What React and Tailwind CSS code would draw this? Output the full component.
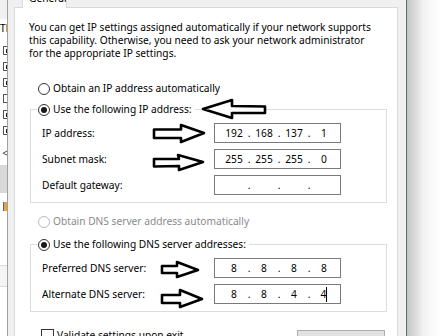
import { Fragment } from 'react'

const font = { fontFamily: '"Noto Sans", "Liberation Sans", sans-serif' }

function Radio({ checked, disabled }) {
  return (
    <span
      className={`w-[12px] h-[12px] shrink-0 rounded-full border bg-white flex items-center justify-center ${
        disabled ? 'border-[#bcbcbc]' : 'border-[#333333]'
      }`}
    >
      {checked && <span className="w-[6px] h-[6px] rounded-full bg-[#1a1a1a]" />}
    </span>
  )
}

function IpBox({ parts, caret }) {
  return (
    <div className="w-[127px] h-[20px] border border-[#7a7a7a] bg-white flex items-center pl-[8px]">
      {parts.map((p, i) => (
        <Fragment key={i}>
          {i > 0 && <span className="w-[8px] text-center">.</span>}
          <span className="w-[22px] flex justify-center items-center">
            {p}
            {caret && i === 3 && <span className="w-px h-[15px] bg-black" />}
          </span>
        </Fragment>
      ))}
    </div>
  )
}

function FieldRow({ label, parts, caret, first }) {
  return (
    <div className={`flex items-center h-[20px] pl-[11px] ${first ? 'mt-[7px]' : 'mt-[6px]'}`}>
      <span className="w-[172px]">{label}</span>
      <IpBox parts={parts} caret={caret} />
    </div>
  )
}

function LeftStrip() {
  const boxes = [true, true, true, false, true, true]
  return (
    <div className="w-[7px] shrink-0 bg-white overflow-hidden flex flex-col">
      <div className="h-[19px] bg-[#f0f0f0]" />
      <span className="mt-[3px] text-[10.2px] leading-[13px] whitespace-nowrap">Th</span>
      <div className="mt-[11px] flex flex-col gap-[7px] pl-[3px]">
        {boxes.map((c, i) => (
          <span key={i} className="w-[9px] h-[9px] border border-[#555] bg-white flex items-center justify-center">
            {c && <span className="w-[3px] h-[4px] bg-[#222]" />}
          </span>
        ))}
      </div>
      <span className="mt-[12px] pl-[2px] text-[11px] leading-[12px] text-[#444]">&lt;</span>
      <div className="mt-[6px] h-[28px] bg-[#d9d9d9]" />
      <div className="mt-[9px] ml-[3px] w-[4px] h-[9px] bg-[#e8a33d] border-l border-[#3a6ea5]" />
      <div className="mt-[54px] h-px bg-[#dadada]" />
      <div className="h-[20px] bg-[#f4f4f4]" />
      <div className="h-px bg-[#dadada]" />
    </div>
  )
}

function Arrows() {
  return (
    <svg className="absolute inset-0 pointer-events-none" width="440" height="336" viewBox="0 0 440 336">
      <g fill="white" stroke="black" strokeWidth="2.6" strokeLinejoin="round">
        <polygon points="203,109 232,100 232,106 265,106.5 265,113 232,113 232,118" />
        <polygon points="154,129.5 181,129.5 181,125 204,133 181,142 181,138 154,138" />
        <polygon points="154,159 179,159 178,155 203,162 179,170 179,166 154,166.5" />
        <polygon points="162,266 177,266 177,262 198,270 177,277 177,273 162,273" />
        <polygon points="162,295 180,295 180,290 202,299 180,307 180,303 162,303" />
      </g>
    </svg>
  )
}

export default function App() {
  return (
    <div className="relative w-[440px] h-[336px] overflow-hidden flex bg-white text-black text-[10.2px] leading-[13px]" style={font}>
      <LeftStrip />

      {/* dialog */}
      <div className="w-[400px] shrink-0 flex flex-col bg-[#f0f0f0] border-l border-r border-l-[#a0a0a0] border-r-[#5a6e73] pl-[6px]">
        <div className="h-[7px] flex pl-[8px]">
          <div className="relative z-10 w-[45px] h-[8px] bg-white border-l border-r border-[#d9d9d9] overflow-hidden pl-[6px]">
            <span className="block -mt-[8px] whitespace-nowrap">General</span>
          </div>
        </div>

        <div className="w-[384px] flex-1 bg-white border border-[#d9d9d9] flex flex-col">
          <p className="mt-[13px] ml-[14px] w-[350px]">
            You can get IP settings assigned automatically if your network supports this capability. Otherwise, you need to ask your network administrator for the appropriate IP settings.
          </p>

          <div className="mt-[22px] ml-[23px] flex items-center gap-[3px] h-[13px]">
            <Radio />
            <span>Obtain an IP address automatically</span>
          </div>

          <div className="mt-[14px] ml-[15px] w-[357px] border border-[#dcdcdc] pb-[7px]">
            <div className="-mt-[7px] ml-[6px] w-fit h-[13px] bg-white pl-[1px] pr-[3px] flex items-center gap-[3px]">
              <Radio checked />
              <span>Use the following IP address:</span>
            </div>
            <FieldRow first label="IP address:" parts={['192', '168', '137', '1']} />
            <FieldRow label="Subnet mask:" parts={['255', '255', '255', '0']} />
            <FieldRow label="Default gateway:" parts={['', '', '', '']} />
          </div>

          <div className="mt-[12px] ml-[23px] flex items-center gap-[3px] h-[13px] text-[#8a8a8a]">
            <Radio disabled />
            <span>Obtain DNS server address automatically</span>
          </div>

          <div className="mt-[16px] ml-[15px] w-[357px] border border-[#dcdcdc] pb-[7px]">
            <div className="-mt-[7px] ml-[6px] w-fit h-[13px] bg-white pl-[1px] pr-[3px] flex items-center gap-[3px]">
              <Radio checked />
              <span>Use the following DNS server addresses:</span>
            </div>
            <FieldRow first label="Preferred DNS server:" parts={['8', '8', '8', '8']} />
            <FieldRow label="Alternate DNS server:" parts={['8', '8', '4', '4']} caret />
          </div>

          <div className="mt-[17px] flex items-start">
            <div className="ml-[26px] flex items-center gap-[3px] h-[13px]">
              <span className="w-[13px] h-[13px] border border-[#333333] bg-white" />
              <span>Validate settings upon exit</span>
            </div>
            <div className="ml-auto mr-[12px] mt-[1px] w-[88px] h-[23px] bg-[#e1e1e1] border border-[#adadad] flex items-center justify-center">
              Advanced...
            </div>
          </div>
        </div>
      </div>

      {/* window behind, on the right */}
      <div className="flex-1 bg-gradient-to-r from-[#c4c4c4] via-[#f2f2f2] to-white" />

      <Arrows />
    </div>
  )
}
